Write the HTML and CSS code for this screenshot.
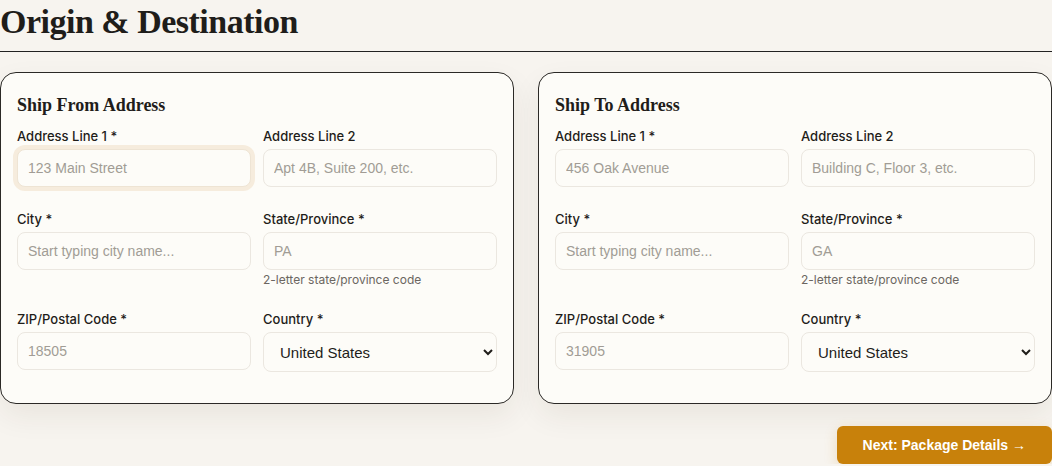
FILE: index.html
```html
<!DOCTYPE html>
<html lang="en">
<head>
    <meta charset="UTF-8">
    <meta name="viewport" content="width=device-width, initial-scale=1.0">
    <title>Origin &amp; Destination</title>
    <link rel="stylesheet" href="styles.css">
</head>

<body>

    <h1 class="page-title">Origin &amp; Destination</h1>

    <div class="address-grid">
        <div class="address-card">
            <h2>Ship From Address</h2>
            <div class="form-row">
                <div class="form-group">
                    <label for="fromLine1">Address Line 1 *</label>
                    <input type="text" id="fromLine1" class="focused" placeholder="123 Main Street">
                </div>
                <div class="form-group">
                    <label for="fromLine2">Address Line 2</label>
                    <input type="text" id="fromLine2" placeholder="Apt 4B, Suite 200, etc.">
                </div>
            </div>
            <div class="form-row">
                <div class="form-group">
                    <label for="fromCity">City *</label>
                    <input type="text" id="fromCity" placeholder="Start typing city name...">
                </div>
                <div class="form-group">
                    <label for="fromState">State/Province *</label>
                    <input type="text" id="fromState" placeholder="PA">
                    <small class="hint">2-letter state/province code</small>
                </div>
            </div>
            <div class="form-row">
                <div class="form-group">
                    <label for="fromZip">ZIP/Postal Code *</label>
                    <input type="text" id="fromZip" placeholder="18505">
                </div>
                <div class="form-group">
                    <label for="fromCountry">Country *</label>
                    <select id="fromCountry">
                        <option>United States</option>
                        <option>Canada</option>
                    </select>
                </div>
            </div>
        </div>

        <div class="address-card">
            <h2>Ship To Address</h2>
            <div class="form-row">
                <div class="form-group">
                    <label for="toLine1">Address Line 1 *</label>
                    <input type="text" id="toLine1" placeholder="456 Oak Avenue">
                </div>
                <div class="form-group">
                    <label for="toLine2">Address Line 2</label>
                    <input type="text" id="toLine2" placeholder="Building C, Floor 3, etc.">
                </div>
            </div>
            <div class="form-row">
                <div class="form-group">
                    <label for="toCity">City *</label>
                    <input type="text" id="toCity" placeholder="Start typing city name...">
                </div>
                <div class="form-group">
                    <label for="toState">State/Province *</label>
                    <input type="text" id="toState" placeholder="GA">
                    <small class="hint">2-letter state/province code</small>
                </div>
            </div>
            <div class="form-row">
                <div class="form-group">
                    <label for="toZip">ZIP/Postal Code *</label>
                    <input type="text" id="toZip" placeholder="31905">
                </div>
                <div class="form-group">
                    <label for="toCountry">Country *</label>
                    <select id="toCountry">
                        <option>United States</option>
                        <option>Canada</option>
                    </select>
                </div>
            </div>
        </div>
    </div>

    <div class="form-actions">
        <button class="next-btn" type="button">Next: Package Details &rarr;</button>
    </div>

</body>
</html>
```

FILE: styles.css
```css
* {
    margin: 0;
    padding: 0;
    box-sizing: border-box;
}

body {
    background-color: #f7f4ef;
    color: #1f1d1a;
    font-family: 'Inter', sans-serif;
}

.page-title {
    font-family: 'Liberation Serif', serif;
    font-size: 34px;
    font-weight: 700;
    letter-spacing: -0.5px;
    line-height: 44px;
    padding-bottom: 7px;
    border-bottom: 1px solid #222;
    margin-bottom: 20px;
}

.address-grid {
    display: grid;
    grid-template-columns: 1fr 1fr;
    gap: 24px;
}

.address-card {
    background: #fdfcf8;
    border: 1px solid #2b2926;
    border-radius: 16px;
    padding: 20px 16px 8px;
    box-shadow: 0 12px 30px rgba(60, 45, 20, 0.07);
}

.address-card h2 {
    font-family: 'Liberation Serif', serif;
    font-size: 18px;
    font-weight: 700;
    line-height: 24px;
    margin-bottom: 10px;
}

.form-row {
    display: grid;
    grid-template-columns: 1fr 1fr;
    gap: 12px;
}

.form-group {
    display: flex;
    flex-direction: column;
    margin-bottom: 23px;
}

.form-group label {
    font-size: 13px;
    font-weight: 500;
    line-height: 18px;
    margin-bottom: 4px;
    color: #1f1d1a;
}

.form-group input,
.form-group select {
    height: 38px;
    padding: 0 10px;
    font-family: 'Liberation Sans', sans-serif;
    font-size: 14px;
    color: #1f1d1a;
    background: #fdfcf8;
    border: 1px solid #ebe7e0;
    border-radius: 8px;
    outline: none;
}

.form-group input::placeholder {
    color: #a19c95;
}

.form-group input.focused {
    border-color: #eee4d4;
    box-shadow: 0 0 0 4px #f6ecdd;
}

.form-group select {
    height: 40px;
    padding: 0 12px;
    font-size: 15px;
}

.hint {
    font-size: 12px;
    color: #6b6661;
    margin-top: 3px;
    line-height: 14px;
}

.form-actions {
    display: flex;
    justify-content: flex-end;
    margin-top: 22px;
}

.next-btn {
    background: #c8810b;
    color: #fff;
    font-family: 'Liberation Sans', sans-serif;
    font-size: 14px;
    font-weight: 700;
    padding: 11px 26px;
    border: none;
    border-radius: 6px;
    cursor: pointer;
    box-shadow: 0 4px 14px rgba(200, 129, 11, 0.2);
}
```
